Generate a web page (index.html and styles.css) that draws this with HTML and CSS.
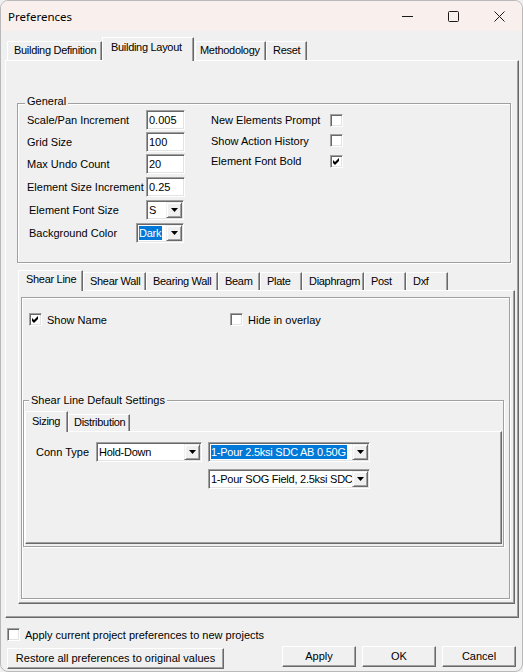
FILE: index.html
```html
<!DOCTYPE html>
<html>
<head>
<meta charset="utf-8">
<title>Preferences</title>
<link rel="stylesheet" href="styles.css">
</head>
<body>
<div class="window">
  <div class="titlebar">
    <span class="title">Preferences</span>
    <div class="winctrls">
      <div class="wbtn"><svg width="11" height="11" viewBox="0 0 11 11"><path d="M0 5.5H11" stroke="#1a1a1a" stroke-width="1"/></svg></div>
      <div class="wbtn"><svg width="11" height="11" viewBox="0 0 11 11"><rect x="0.5" y="0.5" width="10" height="10" rx="1" fill="none" stroke="#1a1a1a" stroke-width="1"/></svg></div>
      <div class="wbtn"><svg width="11" height="11" viewBox="0 0 11 11"><path d="M0.5 0.5L10.5 10.5M10.5 0.5L0.5 10.5" stroke="#1a1a1a" stroke-width="1"/></svg></div>
    </div>
  </div>

  <div class="client">
    <div class="toptabs">
      <div class="tab t-def">Building Definition</div>
      <div class="tab sel t-lay">Building Layout</div>
      <div class="tab t-meth">Methodology</div>
      <div class="tab t-reset">Reset</div>
    </div>

    <div class="mainpanel">
      <div class="group general">
        <div class="gtitle">General</div>
        <div class="gbody">
          <div class="gleft">
            <div class="frow"><span class="lbl">Scale/Pan Increment</span><div class="tb">0.005</div></div>
            <div class="frow"><span class="lbl">Grid Size</span><div class="tb">100</div></div>
            <div class="frow g3"><span class="lbl">Max Undo Count</span><div class="tb">20</div></div>
            <div class="frow g3"><span class="lbl">Element Size Increment</span><div class="tb">0.25</div></div>
            <div class="frow g3"><span class="lbl ind">Element Font Size</span>
              <div class="combo c-font"><span class="val">S</span><span class="dd"><svg width="7" height="4" viewBox="0 0 7 4"><path d="M0 0H7L3.5 4Z" fill="#000"/></svg></span></div>
            </div>
            <div class="frow"><span class="lbl ind short">Background Color</span>
              <div class="combo c-bg"><span class="val"><span class="hl">Dark</span></span><span class="dd"><svg width="7" height="4" viewBox="0 0 7 4"><path d="M0 0H7L3.5 4Z" fill="#000"/></svg></span></div>
            </div>
          </div>
          <div class="gright">
            <div class="crow"><span class="clbl">New Elements Prompt</span><span class="ck"></span></div>
            <div class="crow r21"><span class="clbl">Show Action History</span><span class="ck"></span></div>
            <div class="crow"><span class="clbl">Element Font Bold</span><span class="ck"><svg width="7" height="7" viewBox="0 0 7 7"><path d="M0 2L2 4L6 0V3L2 7L0 5Z" fill="#000"/></svg></span></div>
          </div>
        </div>
      </div>

      <div class="subtabs">
        <div class="itabs">
          <div class="itab sel w65">Shear Line</div>
          <div class="itab w63">Shear Wall</div>
          <div class="itab w72">Bearing Wall</div>
          <div class="itab w42">Beam</div>
          <div class="itab w42">Plate</div>
          <div class="itab w62">Diaphragm</div>
          <div class="itab w42">Post</div>
          <div class="itab w42">Dxf</div>
        </div>
        <div class="ipanel">
          <div class="etched">
            <div class="showrow">
              <div class="citem first"><span class="ck"><svg width="7" height="7" viewBox="0 0 7 7"><path d="M0 2L2 4L6 0V3L2 7L0 5Z" fill="#000"/></svg></span><span class="ctext">Show Name</span></div>
              <div class="citem"><span class="ck"></span><span class="ctext">Hide in overlay</span></div>
            </div>

            <div class="group sld">
              <div class="gtitle">Shear Line Default Settings</div>
              <div class="mtabs">
                <div class="mtab sel w43">Sizing</div>
                <div class="mtab w62">Distribution</div>
              </div>
              <div class="mpanel">
                <div class="connrow">
                  <span class="connlbl">Conn Type</span>
                  <div class="combo c-hold"><span class="val">Hold-Down</span><span class="dd"><svg width="7" height="4" viewBox="0 0 7 4"><path d="M0 0H7L3.5 4Z" fill="#000"/></svg></span></div>
                  <div class="combo c-wide"><span class="val"><span class="hl">1-Pour 2.5ksi SDC AB 0.50G</span></span><span class="dd"><svg width="7" height="4" viewBox="0 0 7 4"><path d="M0 0H7L3.5 4Z" fill="#000"/></svg></span></div>
                </div>
                <div class="connrow2">
                  <div class="combo c-wide"><span class="val">1-Pour SOG Field, 2.5ksi SDC</span><span class="dd"><svg width="7" height="4" viewBox="0 0 7 4"><path d="M0 0H7L3.5 4Z" fill="#000"/></svg></span></div>
                </div>
              </div>
            </div>
          </div>
        </div>
      </div>
    </div>

    <div class="applyrow"><span class="ck"></span><span class="ctext">Apply current project preferences to new projects</span></div>

    <div class="buttons">
      <div class="btn restore">Restore all preferences to original values</div>
      <div class="btn small first">Apply</div>
      <div class="btn small">OK</div>
      <div class="btn small">Cancel</div>
    </div>
  </div>
</div>
</body>
</html>
```

FILE: styles.css
```css
* { box-sizing: border-box; }
html, body { margin: 0; padding: 0; }
body {
  width: 523px;
  height: 672px;
  overflow: hidden;
  background: #f0f0f0;
  font-family: "Liberation Sans", Arial, sans-serif;
  font-size: 11px;
  color: #000;
}
.window {
  width: 523px;
  height: 672px;
  border: 1px solid #b9b9b9;
  border-radius: 8px;
  overflow: hidden;
  background: #f0f0f0;
}

/* title bar */
.titlebar {
  height: 30px;
  background: #f9efec;
  display: flex;
  align-items: center;
  padding-left: 7px;
}
.title {
  flex: 1;
  font-family: "Noto Sans", sans-serif;
  font-size: 11.5px;
  color: #000;
}
.winctrls { display: flex; height: 30px; }
.wbtn {
  width: 46px;
  height: 30px;
  display: flex;
  align-items: center;
  justify-content: center;
}

/* client */
.client { padding: 0 3px 0 4px; }

/* shared raised tab look */
.tab, .itab, .mtab {
  border-top: 1px solid #fff;
  border-left: 1px solid #fff;
  border-right: 1px solid #696969;
  box-shadow: inset -1px 0 0 #a0a0a0;
  line-height: 13px;
  white-space: nowrap;
  overflow: hidden;
  background: #f0f0f0;
  letter-spacing: -0.3px;
  flex: none;
}
.sel { position: relative; z-index: 1; }

.toptabs {
  height: 29px;
  display: flex;
  align-items: flex-end;
  padding-left: 2px;
}
.tab { height: 19px; padding: 2px 0 0 6px; }
.tab.sel { height: 24px; margin-bottom: -1px; padding: 3px 0 0 8px; }
.t-def { width: 95px; }
.t-lay { width: 92px; }
.t-meth { width: 71px; margin-left: 1px; padding-left: 4px; }
.t-reset { width: 41px; }

/* raised panels */
.mainpanel, .ipanel, .mpanel {
  border-top: 1px solid #fff;
  border-left: 1px solid #fff;
  border-right: 1px solid #696969;
  border-bottom: 1px solid #696969;
  box-shadow: inset -1px -1px 0 #a0a0a0;
}
.mainpanel {
  width: 514px;
  height: 558px;
  padding: 42px 0 0 11px;
}

/* group boxes */
.group {
  border: 1px solid #a0a0a0;
  box-shadow: inset 1px 1px 0 #fff, 1px 1px 0 #fff;
}
.gtitle {
  display: table;
  margin: -9px 0 0 7px;
  padding: 0 2px;
  background: #f0f0f0;
  line-height: 13px;
  white-space: nowrap;
}
.general { width: 494px; height: 160px; }
.gbody { display: flex; margin-top: 2px; }
.gleft { padding-left: 9px; width: 176px; flex: none; }
.frow {
  display: flex;
  align-items: center;
  height: 20px;
  margin-bottom: 2px;
}
.frow.g3 { margin-bottom: 3px; }
.lbl { width: 119px; white-space: nowrap; flex: none; }
.lbl.ind { padding-left: 2px; }
.lbl.short { width: 109px; }

.gright { margin-left: 17px; }
.crow { display: flex; align-items: center; height: 20px; }
.crow.r21 { height: 21px; }
.clbl { width: 119px; white-space: nowrap; }

/* sunken text box */
.tb, .combo, .ck {
  border: 1px solid;
  border-color: #a0a0a0 #fff #fff #a0a0a0;
  box-shadow: inset 1px 1px 0 #696969, inset -1px -1px 0 #e3e3e3;
  background: #fff;
}
.tb {
  width: 39px;
  height: 20px;
  padding-left: 2px;
  line-height: 18px;
  flex: none;
}

/* combo */
.combo {
  display: flex;
  height: 20px;
  padding: 1px;
  flex: none;
}
.combo .val {
  flex: 1;
  overflow: hidden;
  white-space: nowrap;
  line-height: 16px;
  padding-left: 1px;
  letter-spacing: -0.25px;
}
.combo .dd {
  width: 16px;
  height: 16px;
  flex: none;
  display: flex;
  align-items: center;
  justify-content: center;
  background: #f0f0f0;
  border: 1px solid;
  border-color: #f0f0f0 #696969 #696969 #f0f0f0;
  box-shadow: inset 1px 1px 0 #fff, inset -1px -1px 0 #a0a0a0;
}
.hl {
  background: #0078d7;
  color: #fff;
  padding: 1px 1px 1px 0;
}
.c-font { width: 38px; }
.c-bg { width: 48px; }
.c-hold { width: 106px; }
.c-wide { width: 162px; }

/* checkbox */
.ck {
  width: 13px;
  height: 13px;
  display: flex;
  align-items: center;
  justify-content: center;
  flex: none;
}

/* inner tab control */
.subtabs { margin: 7px 0 0 1px; width: 497px; }
.itabs { height: 20px; display: flex; align-items: flex-end; }
.itab { height: 18px; padding: 2px 0 0 6px; }
.itab.sel { height: 21px; margin-bottom: -1px; padding: 2px 0 0 7px; }
.w65 { width: 65px; }
.w63 { width: 63px; }
.w72 { width: 72px; }
.w42 { width: 42px; }
.w62 { width: 62px; }
.w43 { width: 43px; }

.ipanel {
  width: 497px;
  height: 314px;
  padding: 6px 0 0 2px;
}
.etched {
  width: 489px;
  height: 302px;
  border: 1px solid #a0a0a0;
  box-shadow: inset 1px 1px 0 #fff, 1px 1px 0 #fff;
}
.showrow {
  display: flex;
  height: 13px;
  margin: 15px 0 0 7px;
}
.citem { display: flex; align-items: center; }
.citem.first { width: 201px; }
.ctext { margin-left: 5px; white-space: nowrap; }

/* shear line default settings */
.sld {
  width: 481px;
  height: 147px;
  margin: 74px 0 0 1px;
}
.sld .gtitle { margin: -7px 0 0 5px; }
.mtabs {
  height: 20px;
  margin-top: 4px;
  display: flex;
  align-items: flex-end;
  padding-left: 1px;
}
.mtab { height: 17px; padding: 1px 0 0 5px; }
.mtab.sel { height: 21px; margin-bottom: -1px; padding: 3px 0 0 6px; }
.mpanel {
  margin-left: 1px;
  width: 477px;
  height: 113px;
  padding: 10px 0 0 10px;
}
.connrow { display: flex; align-items: center; height: 20px; }
.connlbl { width: 60px; white-space: nowrap; }
.connrow .c-wide { margin-left: 6px; }
.connrow2 { margin: 7px 0 0 172px; }

/* bottom */
.applyrow {
  display: flex;
  align-items: center;
  height: 13px;
  margin: 10px 0 0 2px;
}
.buttons {
  display: flex;
  align-items: flex-start;
  margin-top: 5px;
}
.btn {
  height: 21px;
  border: 1px solid;
  border-color: #fff #696969 #696969 #fff;
  box-shadow: inset -1px -1px 0 #a0a0a0;
  background: #f0f0f0;
  text-align: center;
  line-height: 19px;
  white-space: nowrap;
  flex: none;
}
.restore { width: 217px; margin: 2px 0 0 2px; }
.small { width: 74px; margin-left: 6px; }
.small.first { margin-left: 58px; }
```
